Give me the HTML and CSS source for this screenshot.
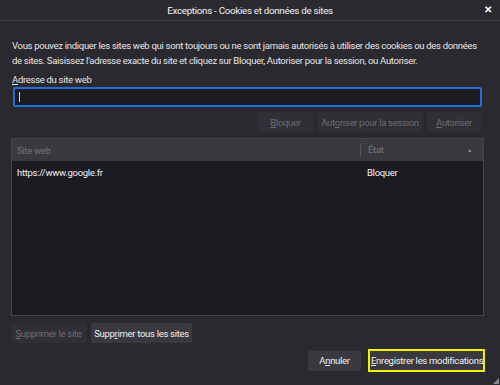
FILE: index.html
```html
<!DOCTYPE html>
<html lang="fr">
<head>
    <meta charset="UTF-8">
    <title>Exceptions - Cookies et données de sites</title>
    <link rel="stylesheet" href="styles.css">
</head>
<body>

<div class="dialog">
    <div class="titlebar">
        <span class="title">Exceptions - Cookies et données de sites</span>
        <span class="close">&#x2715;</span>
    </div>

    <div class="content">
        <p class="intro">Vous pouvez indiquer les sites web qui sont toujours ou ne sont jamais autorisés à utiliser des cookies ou des données de sites. Saisissez l'adresse exacte du site et cliquez sur Bloquer, Autoriser pour la session, ou Autoriser.</p>

        <label class="field-label"><u>A</u>dresse du site web</label>
        <div class="url-input"><span class="caret"></span></div>

        <div class="actions">
            <button class="btn disabled btn-block"><u>B</u>loquer</button>
            <button class="btn disabled btn-session">Aut<u>o</u>riser pour la session</button>
            <button class="btn disabled btn-allow"><u>A</u>utoriser</button>
        </div>

        <div class="site-table">
            <div class="table-head">
                <div class="col-site">Site web</div>
                <div class="col-state">État <span class="sort">&#9650;</span></div>
            </div>
            <div class="table-row">
                <div class="col-site">https://www.google.fr</div>
                <div class="col-state">Bloquer</div>
            </div>
        </div>

        <div class="remove-row">
            <button class="btn disabled btn-remove"><u>S</u>upprimer le site</button>
            <button class="btn btn-remove-all">Supp<u>r</u>imer tous les sites</button>
        </div>

        <div class="footer">
            <button class="btn btn-cancel">A<u>n</u>nuler</button>
            <button class="btn primary"><u>E</u>nregistrer les modifications</button>
        </div>
    </div>
    <span class="grip"></span>
</div>

</body>
</html>
```
FILE: styles.css
```css
/* fenêtre de dialogue sombre */
body {
    margin: 0;
    background-color: #2a292f;
    font-family: Roboto, "Noto Sans", Arial, sans-serif;
    font-size: 9.5px;
    letter-spacing: -0.3px;
    color: #e6e6e8;
}
.dialog {
    position: relative;
    width: 500px;
    height: 385px;
    background-color: #2a292f;
    overflow: hidden;
}
.titlebar {
    height: 20px;
    border-bottom: 1px solid #45444a;
    background-color: #2b2a30;
    display: flex;
    align-items: center;
    justify-content: center;
    position: relative;
}
.title {
    font-size: 9.8px;
    color: #f2f2f4;
}
.close {
    position: absolute;
    right: 8px;
    top: 4px;
    font-size: 10px;
    font-weight: bold;
    color: #ffffff;
}
.content {
    padding: 0 17px 0 12px;
}
.intro {
    margin: 17px 0 0 0;
    line-height: 15px;
}
.field-label {
    display: block;
    margin-top: 5px;
    line-height: 14px;
}
u {
    text-decoration: underline;
}
.url-input {
    box-sizing: border-box;
    margin: 0 1px 0 1px;
    height: 20px;
    border: 2px solid #1f6fd8;
    border-radius: 2px;
    background-color: #1c1b21;
    display: flex;
    align-items: center;
    padding-left: 4px;
}
.caret {
    width: 1px;
    height: 10px;
    background-color: #d8d8d8;
}
.actions {
    display: flex;
    justify-content: flex-end;
    gap: 5px;
    margin: 5px 2px 0 0;
}
.btn {
    font-family: inherit;
    font-size: 9.5px;
    letter-spacing: -0.3px;
    white-space: nowrap;
    height: 20px;
    padding: 0;
    border: none;
    border-radius: 2px;
    background-color: #3a393f;
    color: #f0f0f2;
}
.btn.disabled {
    background-color: #302f35;
    color: #6e6d73;
}
.btn-block {
    width: 55px;
}
.btn-session {
    width: 104px;
}
.btn-allow {
    width: 54px;
}
.site-table {
    margin: 6px -1px 0 -1px;
    height: 178px;
    box-sizing: border-box;
    border: 1px solid #46454b;
    background-color: #1c1b21;
}
.table-head {
    height: 22px;
    display: flex;
    align-items: center;
    background-color: #3a393f;
    color: #75747a;
}
.table-row {
    display: flex;
    align-items: center;
    height: 23px;
    color: #f2f2f4;
}
.col-site {
    flex: 1;
    padding-left: 5px;
}
.col-state {
    width: 116px;
    padding-left: 7px;
    display: flex;
    justify-content: space-between;
}
.table-head .col-state {
    border-left: 1px solid #55545a;
    width: 115px;
    line-height: 14px;
}
.sort {
    font-size: 5px;
    margin-right: 11px;
    line-height: 14px;
    color: #9a999f;
}
.remove-row {
    display: flex;
    gap: 5px;
    margin-top: 7px;
    margin-left: -1px;
}
.btn-remove {
    width: 75px;
}
.btn-remove-all {
    width: 101px;
}
.footer {
    display: flex;
    justify-content: flex-end;
    align-items: center;
    gap: 7px;
    margin-top: 6px;
    margin-right: -2px;
}
.btn-cancel {
    width: 53px;
}
.btn.primary {
    width: 117px;
    height: 23px;
    border: 2px solid #f4f000;
    border-radius: 0;
    text-align: left;
    padding: 0 0 0 1px;
}
.grip {
    position: absolute;
    right: 1px;
    bottom: 1px;
    width: 6px;
    height: 6px;
    background-image: radial-gradient(circle, #8a898f 0.7px, transparent 1px);
    background-size: 2px 2px;
    clip-path: polygon(100% 0, 100% 100%, 0 100%);
}
```
